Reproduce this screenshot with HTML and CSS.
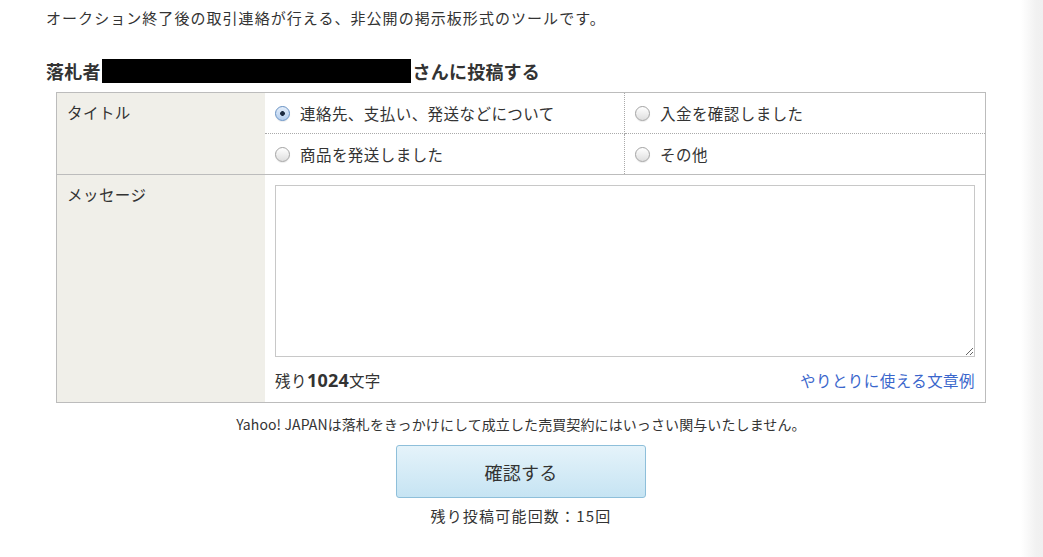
FILE: index.html
```html
<!DOCTYPE html>
<html lang="ja">
<head>
<meta charset="utf-8">
<title>取引ナビ</title>
<link rel="stylesheet" href="styles.css">
</head>
<body>
<div class="page">
  <main class="main">
    <p class="intro">オークション終了後の取引連絡が行える、非公開の掲示板形式のツールです。</p>
    <h2 class="heading">落札者<span class="redact"></span>さんに投稿する</h2>
    <table class="form">
      <tr>
        <th class="label" rowspan="2">タイトル</th>
        <td class="opt opt-top opt-left"><label class="radio"><input type="radio" name="t" checked><span>連絡先、支払い、発送などについて</span></label></td>
        <td class="opt opt-top"><label class="radio"><input type="radio" name="t"><span>入金を確認しました</span></label></td>
      </tr>
      <tr>
        <td class="opt opt-left"><label class="radio"><input type="radio" name="t"><span>商品を発送しました</span></label></td>
        <td class="opt"><label class="radio"><input type="radio" name="t"><span>その他</span></label></td>
      </tr>
      <tr>
        <th class="label msg-label">メッセージ</th>
        <td class="msg" colspan="2">
          <textarea class="textarea"></textarea>
          <div class="msg-foot">
            <span class="remain">残り<b>1024</b>文字</span>
            <a class="link" href="#">やりとりに使える文章例</a>
          </div>
        </td>
      </tr>
    </table>
    <p class="disclaimer">Yahoo! JAPANは落札をきっかけにして成立した売買契約にはいっさい関与いたしません。</p>
    <div class="actions">
      <button class="btn" type="button">確認する</button>
      <p class="count">残り投稿可能回数：15回</p>
    </div>
  </main>
  <div class="edge"></div>
</div>
</body>
</html>
```

FILE: styles.css
```css
html, body {
  margin: 0;
  padding: 0;
  background: #fff;
}
body {
  font-family: "Noto Sans CJK JP", "Noto Sans", sans-serif;
  color: #333;
}
.page {
  display: flex;
  min-height: 557px;
}
.main {
  flex: 1;
  padding-left: 46px;
}
.edge {
  width: 22px;
  background: linear-gradient(to right, #ffffff, #f1f1f1 70%, #f0f0f0);
}
.intro {
  margin: 8px 0 0;
  font-size: 15px;
  letter-spacing: 1.05px;
  line-height: 20px;
}
.heading {
  margin: 30px 0 0;
  font-size: 18px;
  line-height: 26px;
  font-weight: bold;
  display: flex;
  align-items: center;
  letter-spacing: 0.2px;
}
.redact {
  display: inline-block;
  width: 309px;
  height: 24px;
  background: #000;
  margin: 0 2px 0 1px;
}
.form {
  margin: 8px 0 0 10px;
  width: 930px;
  border-collapse: collapse;
  border: 1px solid #bcbcbc;
  font-size: 15.5px;
  letter-spacing: 0.45px;
}
.label {
  width: 188px;
  background: #f0efe9;
  text-align: left;
  vertical-align: top;
  font-weight: normal;
  padding: 8px 10px;
  line-height: 22px;
  border-bottom: 1px solid #bcbcbc;
}
.opt {
  height: 40px;
  padding: 0 10px;
  vertical-align: middle;
}
.opt-top {
  border-bottom: 1px dotted #aaa;
}
.opt-left {
  border-right: 1px dotted #aaa;
  width: 339px;
}
tr:nth-child(2) .opt {
  border-bottom: 1px solid #bcbcbc;
}
.radio {
  display: flex;
  align-items: center;
  line-height: 22px;
}
.radio input {
  appearance: none;
  -webkit-appearance: none;
  width: 15px;
  height: 15px;
  margin: 0 10px 0 0;
  border-radius: 50%;
  border: 1px solid #a4a4a4;
  background: linear-gradient(#ffffff, #dedede);
  box-shadow: 0 1px 1px rgba(0,0,0,0.08);
  box-sizing: border-box;
  flex-shrink: 0;
}
.radio input:checked {
  border-color: #6a93c4;
  background: radial-gradient(circle, #1c2b40 0, #1c2b40 2px, transparent 2.7px), linear-gradient(#e4eefa, #b3cdee);
}
.msg {
  padding: 10px 10px 10px;
  vertical-align: top;
}
.textarea {
  display: block;
  width: 700px;
  height: 172px;
  box-sizing: border-box;
  border: 1px solid #c8c8c8;
  margin: 0;
  resize: vertical;
  font-family: inherit;
}
.msg-foot {
  margin-top: 11px;
  display: flex;
  justify-content: space-between;
  align-items: center;
  line-height: 24px;
  width: 700px;
}
.remain b {
  font-family: "Noto Sans", sans-serif;
  font-weight: bold;
  font-size: 18px;
  letter-spacing: 0.2px;
}
.link {
  color: #3a66cc;
  text-decoration: none;
}
.disclaimer {
  margin: 11px 0 0;
  width: 950px;
  text-align: center;
  font-size: 14px;
  line-height: 20px;
  letter-spacing: 0.1px;
}
.actions {
  width: 950px;
  display: flex;
  flex-direction: column;
  align-items: center;
}
.btn {
  margin-top: 11px;
  width: 250px;
  height: 53px;
  border: 1px solid #8ebfda;
  border-radius: 3px;
  background: linear-gradient(#e5f3fa, #c6e4f3);
  font-family: inherit;
  font-size: 18px;
  color: #333;
  letter-spacing: 0.3px;
}
.count {
  margin: 8px 0 0;
  font-size: 15px;
  letter-spacing: 1.2px;
  line-height: 20px;
}
```
